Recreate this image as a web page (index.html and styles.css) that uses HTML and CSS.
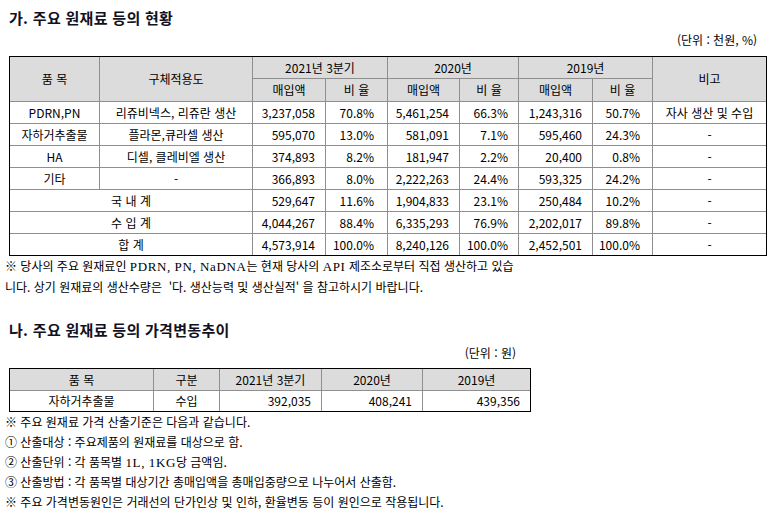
FILE: index.html
```html
<!DOCTYPE html>
<html lang="ko">
<head>
<meta charset="utf-8">
<title>주요 원재료 등의 현황</title>
<link rel="stylesheet" href="styles.css">
</head>
<body>
<div class="doc">
  <h2 class="title">가. 주요 원재료 등의 현황</h2>
  <div class="unit unit-wide">(단위 : 천원, %)</div>
  <table class="tbl tbl-wide">
    <colgroup>
      <col class="c90"><col class="c153"><col class="c73"><col class="c62"><col class="c72"><col class="c59"><col class="c74"><col class="c60"><col class="c113">
    </colgroup>
    <thead>
      <tr class="h1">
        <th rowspan="2">품 목</th>
        <th rowspan="2">구체적용도</th>
        <th colspan="2">2021년 3분기</th>
        <th colspan="2">2020년</th>
        <th colspan="2">2019년</th>
        <th rowspan="2" class="edge">비고</th>
      </tr>
      <tr class="h2">
        <th>매입액</th><th>비 율</th>
        <th>매입액</th><th>비 율</th>
        <th>매입액</th><th>비 율</th>
      </tr>
    </thead>
    <tbody>
      <tr>
        <td>PDRN,PN</td><td>리쥬비넥스, 리쥬란 생산</td>
        <td class="n">3,237,058</td><td class="pa">70.8%</td>
        <td class="n">5,461,254</td><td class="pb">66.3%</td>
        <td class="n">1,243,316</td><td class="pc">50.7%</td>
        <td class="edge">자사 생산 및 수입</td>
      </tr>
      <tr>
        <td>자하거추출물</td><td>플라몬,큐라셀 생산</td>
        <td class="n">595,070</td><td class="pa">13.0%</td>
        <td class="n">581,091</td><td class="pb">7.1%</td>
        <td class="n">595,460</td><td class="pc">24.3%</td>
        <td class="edge">-</td>
      </tr>
      <tr>
        <td>HA</td><td>디셀, 클레비엘 생산</td>
        <td class="n">374,893</td><td class="pa">8.2%</td>
        <td class="n">181,947</td><td class="pb">2.2%</td>
        <td class="n">20,400</td><td class="pc">0.8%</td>
        <td class="edge">-</td>
      </tr>
      <tr>
        <td>기타</td><td>-</td>
        <td class="n">366,893</td><td class="pa">8.0%</td>
        <td class="n">2,222,263</td><td class="pb">24.4%</td>
        <td class="n">593,325</td><td class="pc">24.2%</td>
        <td class="edge">-</td>
      </tr>
      <tr>
        <td colspan="2">국 내 계</td>
        <td class="n">529,647</td><td class="pa">11.6%</td>
        <td class="n">1,904,833</td><td class="pb">23.1%</td>
        <td class="n">250,484</td><td class="pc">10.2%</td>
        <td class="edge">-</td>
      </tr>
      <tr>
        <td colspan="2">수 입 계</td>
        <td class="n">4,044,267</td><td class="pa">88.4%</td>
        <td class="n">6,335,293</td><td class="pb">76.9%</td>
        <td class="n">2,202,017</td><td class="pc">89.8%</td>
        <td class="edge">-</td>
      </tr>
      <tr class="last">
        <td colspan="2">합 계</td>
        <td class="n">4,573,914</td><td class="pa">100.0%</td>
        <td class="n">8,240,126</td><td class="pb">100.0%</td>
        <td class="n">2,452,501</td><td class="pc">100.0%</td>
        <td class="edge">-</td>
      </tr>
    </tbody>
  </table>
  <p class="note">※ 당사의 주요 원재료인 <span class="lat">PDRN, PN, NaDNA</span>는 현재 당사의 <span class="lat">API</span> 제조소로부터 직접 생산하고 있습<br>니다. 상기 원재료의 생산수량은 &nbsp;'다. 생산능력 및 생산실적' 을 참고하시기 바랍니다.</p>

  <h2 class="title title-2">나. 주요 원재료 등의 가격변동추이</h2>
  <div class="unit unit-narrow">(단위 : 원)</div>
  <table class="tbl tbl-narrow">
    <colgroup>
      <col class="c144"><col class="c66"><col class="c102"><col class="c101"><col class="c107">
    </colgroup>
    <thead>
      <tr class="h1">
        <th>품 목</th><th>구분</th><th>2021년 3분기</th><th>2020년</th><th class="edge">2019년</th>
      </tr>
    </thead>
    <tbody>
      <tr class="last short">
        <td>자하거추출물</td><td>수입</td>
        <td class="n">392,035</td><td class="n">408,241</td><td class="n edge">439,356</td>
      </tr>
    </tbody>
  </table>
  <div class="note note-list">
    <p>※ 주요 원재료 가격 산출기준은 다음과 같습니다.</p>
    <p>① 산출대상 : 주요제품의 원재료를 대상으로 함.</p>
    <p>② 산출단위 : 각 품목별 <span class="lat">1L, 1KG</span>당 금액임.</p>
    <p>③ 산출방법 : 각 품목별 대상기간 총매입액을 총매입중량으로 나누어서 산출함.</p>
    <p>※ 주요 가격변동원인은 거래선의 단가인상 및 인하, 환율변동 등이 원인으로 작용됩니다.</p>
  </div>
</div>
</body>
</html>
```

FILE: styles.css
```css
html, body {
  margin: 0;
  padding: 0;
  background: #ffffff;
}

body {
  font-family: "Noto Sans CJK KR", "Noto Sans", sans-serif;
  color: #000000;
}

.doc {
  padding-top: 9px;
}

.title {
  margin: 0 0 5px 9px;
  height: 18px;
  line-height: 18px;
  font-size: 15px;
  letter-spacing: 0.3px;
  font-weight: bold;
  color: #111122;
}

.title-2 {
  margin-top: 24px;
  margin-bottom: 6px;
}

.unit {
  margin-left: 9px;
  height: 16px;
  line-height: 16px;
  font-size: 12px;
  text-align: right;
  box-sizing: border-box;
}

.unit-wide {
  width: 758px;
  padding-right: 10px;
  margin-bottom: 8px;
}

.unit-narrow {
  width: 522px;
  padding-right: 15px;
  margin-bottom: 7px;
}

.tbl {
  margin-left: 9px;
  border-collapse: separate;
  border-spacing: 0;
  table-layout: fixed;
  border: 1px solid #000000;
  font-size: 12px;
}

.tbl-wide { width: 758px; }
.tbl-narrow { width: 522px; }

.c90 { width: 90px; }
.c153 { width: 153px; }
.c73 { width: 73px; }
.c62 { width: 62px; }
.c72 { width: 72px; }
.c59 { width: 59px; }
.c74 { width: 74px; }
.c60 { width: 60px; }
.c113 { width: 113px; }
.c144 { width: 144px; }
.c66 { width: 66px; }
.c102 { width: 102px; }
.c101 { width: 101px; }
.c107 { width: 107px; }

.tbl th,
.tbl td {
  box-sizing: border-box;
  padding: 0 2px;
  border-right: 1px solid #8f8f8f;
  border-bottom: 1px solid #8f8f8f;
  line-height: 14px;
  font-weight: normal;
  text-align: center;
  vertical-align: middle;
  white-space: nowrap;
  overflow: hidden;
}

.tbl th {
  background: #dcdcdc;
}

.tbl .edge {
  border-right: 0;
}

.tbl tr.last td {
  border-bottom: 0;
}

.tbl-wide .h1 th { height: 22px; }
.tbl-wide .h2 th { height: 23px; }
.tbl-wide td { height: 22px; }
.tbl-wide tr.last td { height: 21px; }

.tbl-narrow .h1 th { height: 22px; }
.tbl-narrow tr.short td { height: 20px; }

.tbl td.n {
  text-align: right;
  padding-right: 10px;
}

.tbl td.pa { text-align: right; padding-right: 13px; }
.tbl td.pb { text-align: right; padding-right: 10px; }
.tbl td.pc { text-align: right; padding-right: 12px; }

.note {
  margin: 0 0 0 5px;
  font-family: "Noto Sans CJK KR", serif;
  font-size: 12px;
  line-height: 20px;
}

.note .lat {
  font-family: "Liberation Serif", serif;
  font-size: 13px;
  letter-spacing: 0.6px;
}

.note-list p {
  margin: 0;
  line-height: 19.75px;
}
```
